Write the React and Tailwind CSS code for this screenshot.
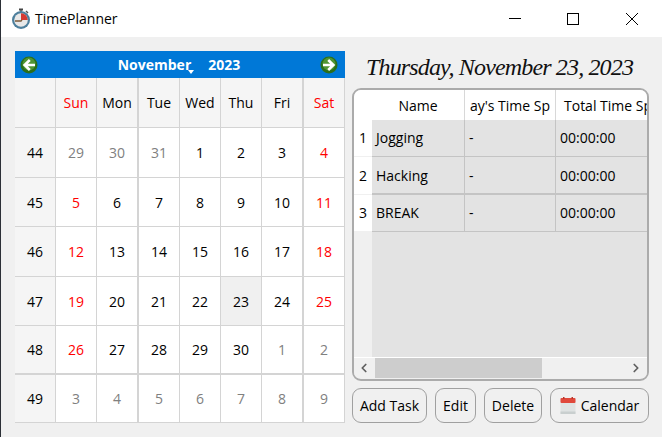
import { ChevronLeft, ChevronRight } from "lucide-react";

const colWidths = "grid-cols-[41px_41px_42px_41px_41px_41px_42px_41px]";
const rowHeights = "grid-rows-[50px_50px_49px_50px_49px_49px_48px]";
const days = ["Sun", "Mon", "Tue", "Wed", "Thu", "Fri", "Sat"];

const weeks = [
  { no: 44, days: [29, 30, 31, 1, 2, 3, 4] },
  { no: 45, days: [5, 6, 7, 8, 9, 10, 11] },
  { no: 46, days: [12, 13, 14, 15, 16, 17, 18] },
  { no: 47, days: [19, 20, 21, 22, 23, 24, 25] },
  { no: 48, days: [26, 27, 28, 29, 30, 1, 2] },
  { no: 49, days: [3, 4, 5, 6, 7, 8, 9] },
];

const tasks = ["Jogging", "Hacking", "BREAK"];

function NavArrow({ dir }) {
  return (
    <svg width="18" height="18" viewBox="0 0 18 18">
      <circle cx="9" cy="9" r="8.5" fill="#2b6f1a" />
      <circle cx="9" cy="8" r="6.5" fill="#5fa53f" opacity="0.7" />
      <path
        d={dir === "left" ? "M15 9H6M9.8 4L4.6 9l5.2 5" : "M3 9h9M8.2 4l5.2 5-5.2 5"}
        fill="none"
        stroke="#fff"
        strokeWidth="2.6"
      />
    </svg>
  );
}

function Stopwatch() {
  return (
    <svg width="20" height="22" viewBox="0 0 20 22">
      <rect x="8" y="0.5" width="4" height="2" fill="#444" />
      <rect x="9" y="2" width="2" height="2" fill="#666" />
      <path d="M15 3l2 2" stroke="#555" strokeWidth="1.5" />
      <circle cx="10" cy="12" r="9" fill="#4d7f9c" />
      <circle cx="10" cy="12" r="6.8" fill="#e8e8e8" />
      <path d="M10 12V5.2A6.8 6.8 0 0 1 16.8 12Z" fill="#d63a32" />
      <path d="M4 13h6l1-1" stroke="#7a5a3a" strokeWidth="1.4" fill="none" />
    </svg>
  );
}

function CalendarIcon() {
  return (
    <svg width="16" height="18" viewBox="0 0 16 18">
      <rect x="0.5" y="1" width="15" height="16" rx="1" fill="#dfe3e3" />
      <rect x="0.5" y="1" width="15" height="5" rx="1" fill="#e0493c" />
      <rect x="0.5" y="14.5" width="15" height="2.5" fill="#c9cfcf" />
      <rect x="3" y="0" width="1.5" height="2" fill="#b9362b" />
      <rect x="11.5" y="0" width="1.5" height="2" fill="#b9362b" />
    </svg>
  );
}

function DayCell({ n, col, row }) {
  const inMonth = (row === 0 && n < 8) || (row > 0 && row < 4) || (row === 4 && n > 20);
  let color = "text-[#808080]";
  if (inMonth) color = col === 0 || col === 6 ? "text-[#ff0000]" : "text-black";
  const selected = row === 3 && n === 23;
  const thickRight = col === 1 || col === 5;
  const thickBottom = row === 4;
  return (
    <div
      className={`flex items-center justify-center border-r border-[#d4d4d4] ${
        thickRight ? "border-r-2" : ""
      } ${thickBottom ? "border-b-2" : "border-b"} ${selected ? "bg-[#f0f0f0]" : "bg-white"} ${color}`}
    >
      {n}
    </div>
  );
}

function Button({ children, className }) {
  return (
    <button
      className={`flex h-[35px] items-center justify-center gap-[5px] rounded-[9px] border border-[#a0a0a0] text-[14px] text-black ${className}`}
    >
      {children}
    </button>
  );
}

export default function App() {
  return (
    <div className="flex h-[437px] w-[662px] flex-col overflow-hidden border-l border-[#2b2f36] bg-[#f0f0f0] font-['Open_Sans','Noto_Sans',sans-serif] text-[14px] text-black">
      {/* Title bar */}
      <div className="flex h-[37px] items-center bg-white">
        <div className="ml-[10px] mr-[4px] flex">
          <Stopwatch />
        </div>
        <span className="text-[14px]">TimePlanner</span>
        <div className="ml-auto flex items-center">
          <svg width="12" height="12" viewBox="0 0 12 12" className="mr-[46px]">
            <path d="M0 5.5h12" stroke="#000" />
          </svg>
          <svg width="12" height="12" viewBox="0 0 12 12" className="mr-[47px]">
            <rect x="0.5" y="0.5" width="11" height="11" fill="none" stroke="#000" />
          </svg>
          <svg width="12" height="12" viewBox="0 0 12 12" className="mr-[24px]">
            <path d="M0 0l12 12M12 0L0 12" stroke="#000" />
          </svg>
        </div>
      </div>

      <div className="flex flex-1 pl-[14px]">
        {/* Calendar */}
        <div className="mt-[14px] w-[330px]">
          <div className="flex h-[27px] items-center justify-between bg-[#0078d7] pl-[5px] pr-[7px]">
            <NavArrow dir="left" />
            <div className="flex items-center text-[14px] font-bold text-white">
              <span className="relative">
                November
                <span className="absolute -right-[3px] bottom-[1px] h-0 w-0 border-x-[3.5px] border-t-[4px] border-x-transparent border-t-white" />
              </span>
              <span className="ml-[17px]">2023</span>
            </div>
            <NavArrow dir="right" />
          </div>
          <div className={`grid ${colWidths} ${rowHeights}`}>
            <div className="border-b border-r border-[#d4d4d4] bg-[#f5f5f5]" />
            {days.map((d, i) => (
              <div
                key={d}
                className={`flex items-center justify-center border-b border-r border-[#d4d4d4] bg-[#f5f5f5] ${
                  i === 1 || i === 5 ? "border-r-2" : ""
                } ${i === 0 || i === 6 ? "text-[#ff0000]" : "text-black"}`}
              >
                {d}
              </div>
            ))}
            {weeks.map((w, row) => [
              <div
                key={w.no}
                className={`flex items-center justify-center border-r border-[#d4d4d4] bg-[#f5f5f5] ${
                  row === 4 ? "border-b-2" : "border-b"
                }`}
              >
                {w.no}
              </div>,
              ...w.days.map((n, col) => <DayCell key={`${row}-${col}`} n={n} col={col} row={row} />),
            ])}
          </div>
        </div>

        {/* Day panel */}
        <div className="ml-[7px] w-[297px]">
          <div className="mt-[8px] flex h-[43px] items-center whitespace-nowrap pl-[14px] font-['Liberation_Serif',serif] text-[24px] italic leading-none tracking-[-0.85px] text-[#111]">
            Thursday, November 23, 2023
          </div>
          <div className="flex h-[293px] flex-col overflow-hidden rounded-[9px] border-2 border-[#ababab] bg-[#f0f0f0]">
            <div className="grid h-[30px] shrink-0 grid-cols-[18px_93px_91px_91px] bg-white">
              <div />
              <div className="flex items-center justify-center border-r border-[#d8d8d8]">Name</div>
              <div className="flex items-center justify-center border-r border-[#d8d8d8]">ay's Time Sp</div>
              <div className="flex items-center overflow-hidden whitespace-nowrap pl-[8px]">Total Time Spent</div>
            </div>
            <div className="grid grid-cols-[18px_93px_91px_91px] grid-rows-[37px_38px_37px]">
              {tasks.map((t, i) => [
                <div
                  key={`n${i}`}
                  className={`flex items-center justify-center border-b border-[#f0f0f0] bg-white ${
                    i === 1 ? "" : "pb-[2px]"
                  }`}
                >
                  {i + 1}
                </div>,
                <div
                  key={`t${i}`}
                  className={`flex items-center border-r border-[#c4c4c4] bg-[#e3e3e3] pl-[4px] ${
                    i === 1 ? "border-b-2" : "border-b pb-[2px]"
                  } border-b-[#c4c4c4]`}
                >
                  {t}
                </div>,
                <div
                  key={`d${i}`}
                  className={`flex items-center border-r border-[#c4c4c4] bg-[#e3e3e3] pl-[4px] ${
                    i === 1 ? "border-b-2" : "border-b pb-[2px]"
                  } border-b-[#c4c4c4]`}
                >
                  -
                </div>,
                <div
                  key={`s${i}`}
                  className={`flex items-center bg-[#e3e3e3] pl-[4px] ${
                    i === 1 ? "border-b-2" : "border-b pb-[2px]"
                  } border-[#c4c4c4]`}
                >
                  00:00:00
                </div>,
              ])}
            </div>
            <div className="flex flex-1 border-b border-white">
              <div className="w-[18px] bg-[#f0f0f0]" />
              <div className="flex-1 bg-[#e3e3e3]" />
            </div>
            <div className="flex h-[20px] shrink-0 items-center bg-[#f0f0f0]">
              <ChevronLeft size={14} strokeWidth={3} className="ml-[3px] text-[#606060]" />
              <div className="ml-[4px] h-full w-[167px] bg-[#cdcdcd]" />
              <ChevronRight size={14} strokeWidth={3} className="ml-auto mr-[4px] text-[#606060]" />
            </div>
            <div className="h-[1px] shrink-0" />
          </div>
          <div className="mt-[7px] flex gap-[8px]">
            <Button className="w-[75px]">Add Task</Button>
            <Button className="w-[41px]">Edit</Button>
            <Button className="w-[58px]">Delete</Button>
            <Button className="w-[99px]">
              <CalendarIcon />
              Calendar
            </Button>
          </div>
        </div>
      </div>
    </div>
  );
}
